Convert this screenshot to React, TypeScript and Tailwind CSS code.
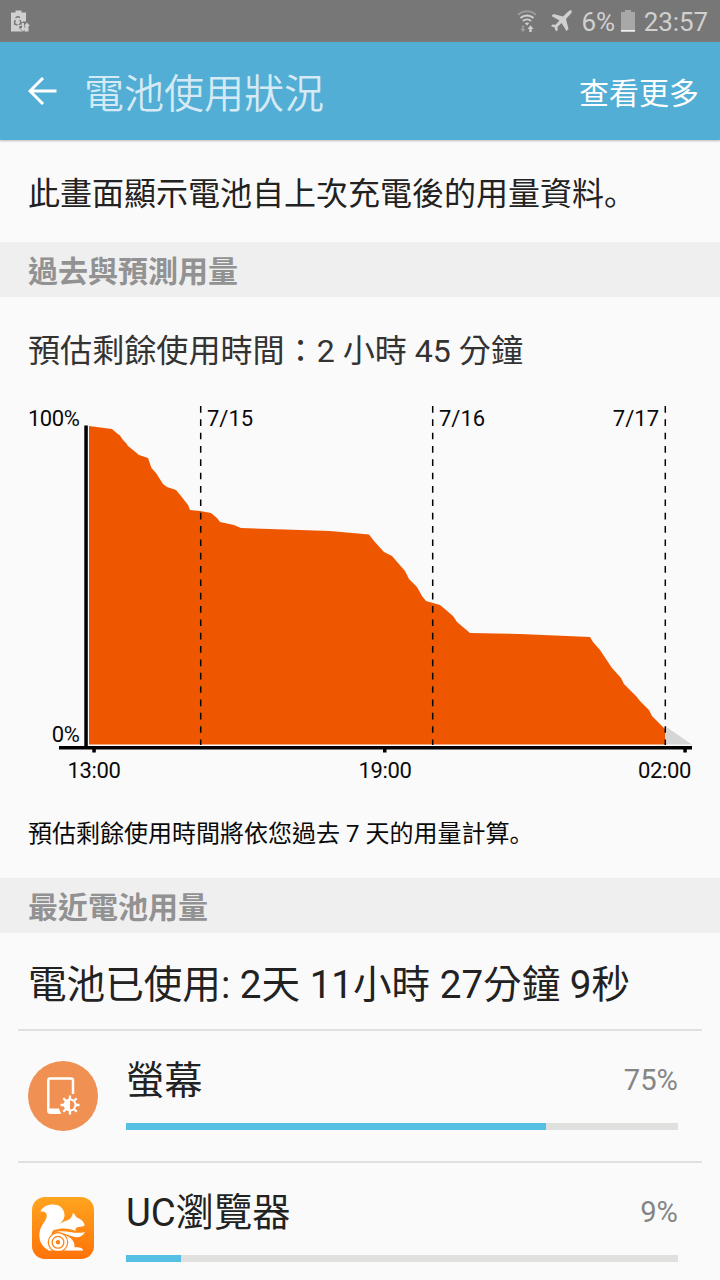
import React from 'react';

const CJK = "font-['Roboto','Noto_Sans_CJK_TC',sans-serif]";

const HISTORY =
  '89,426 112,429 116,432.5 120,435.5 123,440 126,443 128,446 133,450 139,455 148,458 151.5,468 156,473 163,484 167,487 176,490 181,496 188,505 190,510 200,511 211,513 217,518 220,522 234,525 241,528 270,529 330,531 369,534.5 374,541 384,552 392,556 398,563 405,571 409,579 417,587 422,596 426,601 440,605 446,610 453,616 457,622 470,633 520,634 590,637 593,642 600,650 612,668 621,678 624,684 636,696 640,701 649,710 652,716 665,729 665,744.5 89,744.5';

const StatusBar: React.FC = () => (
  <div className="flex h-[42px] items-center justify-between bg-[#777777] pr-[12px] pl-[11px] text-[#d0d0d0]">
    <svg className="h-[24px] w-[20px]" viewBox="0 0 20 24">
      <path d="M4.5 1.5h6v2H15v9h-3v5h3v5H0v-19h4.5z" fill="currentColor" />
      <path
        d="M4.5 9l2-1.5 2.5 1M9 11l1 3-2 2M6.5 16l-3-1 .5-4"
        fill="none"
        stroke="#777777"
        strokeWidth="1.5"
      />
      <path d="M8.5 17h2v-4h3v10H12l-4-4z" fill="#777777" />
      <path
        d="M11 14h2v5h2l-3 3.5L9 19h2zM16 22.5h-1.5V17H13l3-3.5L19 17h-1.5v5.5z"
        fill="currentColor"
      />
    </svg>
    <div className="flex items-center">
      <svg className="mr-[14px] h-[24px] w-[20px]" viewBox="0 0 20 24">
        <path d="M1 5.8a13 13 0 0 1 18 0" fill="none" stroke="#9b9b9b" strokeWidth="2" />
        <path
          d="M3.5 9a9.5 9.5 0 0 1 13 0M6 12a6 6 0 0 1 8 0"
          fill="none"
          stroke="currentColor"
          strokeWidth="2"
        />
        <path d="M7.8 14.2q2.2-1.5 4.4 0L10 16.5z" fill="currentColor" />
        <path d="M5 16.5h2V20h1.8L6 23l-2.8-3H5z" fill="#9b9b9b" />
        <path d="M12.3 23v-3h-1.8l3-3.8 3 3.8h-1.800v3z" fill="currentColor" />
      </svg>
      <svg className="mr-[9px] h-[22px] w-[21px]" viewBox="0 0 21 22">
        <path
          d="M20.5.5c.8 1 0 2.500-1 3.500l-4.500 5L17.500 19l-2 2-5-8-4 4 .3 3L5 21.500l-1.500-4L0 16l1.500-1.500 3 .3 4-4.300L.5 6l2-2L12 6.500 17 1.800C18 .8 19.500-.2 20.500.5z"
          fill="currentColor"
        />
      </svg>
      <span className="pt-[1px] text-[26px] leading-none tracking-[-0.2px]">6%</span>
      <svg className="mr-[9px] ml-[6px] h-[22px] w-[14px]" viewBox="0 0 14 22">
        <path d="M4 0h6v2h4v20H0V2h4z" fill="#a8a8a8" />
        <path d="M0 20h14v1.5H0z" fill="#f2f2f2" />
      </svg>
      <span className="pt-[1px] text-[26px] leading-none tracking-[-0.1px]">23:57</span>
    </div>
  </div>
);

const SectionHeader: React.FC<{ title: string }> = ({ title }) => (
  <h2 className="flex h-[55px] items-center bg-[#efefef] pt-[4px] pl-7 text-[30px] leading-none font-bold text-[#929292]">
    {title}
  </h2>
);

// full stop that sits in the lower left of its cell
const Stop: React.FC = () => (
  <span className="font-['Noto_Sans_CJK_JP',sans-serif]" lang="ja">
    。
  </span>
);

const BatteryChart: React.FC = () => (
  <svg className="block h-[400px] w-[720px]" viewBox="0 395 720 400">
    <polygon points="665,726 692,744.5 665,744.5" fill="#d6d6d6" />
    <polygon points={HISTORY} fill="#ee5700" />
    <g stroke="#000" strokeWidth="1.5" strokeDasharray="6.67 6.67">
      <path d="M200.7 406V745" />
      <path d="M432.7 406V745" />
      <path d="M665.3 406V745" />
    </g>
    <path d="M84.3 425.5h3.5V746h-3.5zM59 746h633v3.6H59z" />
    <path d="M92.3 749h3.5v3.6h-3.5zM383 749h3.5v3.6H383zM683.3 749h3.5v3.6h-3.5z" />
    <g fontSize="22" fill="#0a0a0a">
      <text x="79.5" y="425.5" textAnchor="end" letterSpacing="-0.4">100%</text>
      <text x="79.5" y="741.5" textAnchor="end" letterSpacing="-0.4">0%</text>
      <text x="207" y="425.5">7/15</text>
      <text x="439" y="425.5">7/16</text>
      <text x="659" y="425.5" textAnchor="end">7/17</text>
      <text x="94" y="777.5" textAnchor="middle" letterSpacing="-0.35">13:00</text>
      <text x="385" y="777.5" textAnchor="middle" letterSpacing="-0.35">19:00</text>
      <text x="691" y="777.5" textAnchor="end" letterSpacing="-0.35">02:00</text>
    </g>
  </svg>
);

const ScreenIcon: React.FC = () => (
  <svg className="h-[70px] w-[70px]" viewBox="0 0 70 70">
    <circle cx="35" cy="35" r="35" fill="#f09052" />
    <path
      d="M45 33V19.5q0-2-2-2H22.3q-2 0-2 2v30q0 2 2 2H32"
      fill="none"
      stroke="#fff"
      strokeWidth="2.5"
    />
    <path d="M20 47.5h11q.5 3 2.5 5.2H22q-2 0-2-2z" fill="#fff" />
    <path
      d="M42 34.5v19M32.5 44h19M35.3 37.3l13.4 13.4M48.7 37.3L35.3 50.7"
      stroke="#fff"
      strokeWidth="2.3"
    />
    <circle cx="42" cy="44" r="6.5" fill="#fff" />
    <path d="M42 39.5a4.5 4.5 0 0 1 0 9z" fill="#f09052" />
  </svg>
);

const UcIcon: React.FC = () => (
  <svg className="h-[70px] w-[70px]" viewBox="0 0 70 70">
    <defs>
      <linearGradient id="uc" x1="0" y1="0" x2="0" y2="1">
        <stop offset="0" stopColor="#ffa51f" />
        <stop offset="1" stopColor="#ff7208" />
      </linearGradient>
    </defs>
    <rect x="4" y="4" width="62" height="62" rx="13" fill="url(#uc)" />
    <g fill="#fff">
      {/* tail */}
      <path d="M12.5 18.5C16 9.500 36 8 36.500 22c0 9-12 11-13 20l-2 15.500C10 53 9 39 15 31c4-5 7-13-2.500-12.500z" />
      {/* head and chest */}
      <path d="M25 37.500c2-5 8-8 14-10 3-1 5-3 6-8l4 5.300c4 1.200 7.500 4 7.500 8-3 1.500-6 .7-8 2-2 1.500 0 3-1 3-5-2-13-4-22.500-.3z" />
      {/* paw */}
      <path d="M26 39.500c12-4 19 2.500 31-.5-3 5.500-8 6-13 4.300-5-1.800-10-4.300-18-3.800z" />
      {/* leg */}
      <path d="M20 57.700h35c0-3-3-3.700-8.500-3.500 1-7-6-12.500-15-12.700z" />
    </g>
    <circle cx="30" cy="49.3" r="10.3" fill="#ff8212" />
    <circle cx="30" cy="49.3" r="7.800" fill="none" stroke="#fff" strokeWidth="2.600" />
    <circle cx="30" cy="49.3" r="3.700" fill="none" stroke="#fff" strokeWidth="3" />
    <path d="M18 57.700h37v3H18z" fill="#ff780b" />
  </svg>
);

interface UsageRowProps {
  icon: React.ReactNode;
  name: string;
  percent: number;
}

const UsageRow: React.FC<UsageRowProps> = ({ icon, name, percent }) => (
  <li className="mx-[18px] flex h-[132px] border-t-2 border-[#e0e0e0] pt-[30px] pr-[24px] pl-[10px]">
    {icon}
    <div className="ml-7 flex-1">
      <div className="flex h-[40px] items-center justify-between">
        <span className="text-[38.3px] leading-none text-[#222222]">{name}</span>
        <span className="text-[29.2px] leading-none text-[#858585]">{percent}%</span>
      </div>
      <div className="mt-[22px] h-[7px] bg-[#e0e0de]">
        <div className="h-full bg-[#55bfe4]" style={{ width: `${percent + 1}%` }} />
      </div>
    </div>
  </li>
);

export default function App() {
  return (
    <div className={`h-[1280px] w-[720px] overflow-hidden bg-[#fafafa] ${CJK}`}>
      <StatusBar />
      <header className="flex h-[98px] items-center bg-[#52aed5] pr-[21px] pl-7 text-white shadow-[0_1px_2px_#bbbbbb]">
        <svg className="h-[28px] w-[29px]" viewBox="0 0 29 28">
          <path d="M15 1L2 14l13 13M2 14h26.5" fill="none" stroke="#fff" strokeWidth="3" />
        </svg>
        <h1 className="ml-[27px] pt-[7px] text-[40px] leading-none font-[350] text-[#d5eaf4]">
          電池使用狀況
        </h1>
        <span className="ml-auto pt-[5px] text-[30px] leading-none">查看更多</span>
      </header>
      <p className="flex h-[102px] items-center pt-[3px] pl-7 text-[32px] leading-none text-[#222222]">
        <span>
          此畫面顯示電池自上次充電後的用量資料
          <Stop />
        </span>
      </p>
      <SectionHeader title="過去與預測用量" />
      <p className="flex h-[98px] items-center pt-[11px] pl-7 text-[32.1px] leading-none text-[#333333]">
        預估剩餘使用時間：2 小時 45 分鐘
      </p>
      <BatteryChart />
      <p className="flex h-[83px] items-center pb-[8px] pl-7 text-[24px] leading-none text-[#0a0a0a]">
        <span>
          預估剩餘使用時間將依您過去 7 天的用量計算
          <Stop />
        </span>
      </p>
      <SectionHeader title="最近電池用量" />
      <p className="flex h-[96px] items-center pt-[9px] pl-7 text-[38.6px] leading-none text-[#222222]">
        電池已使用: 2天 11小時 27分鐘 9秒
      </p>
      <ul>
        <UsageRow icon={<ScreenIcon />} name="螢幕" percent={75} />
        <UsageRow icon={<UcIcon />} name="UC瀏覽器" percent={9} />
      </ul>
    </div>
  );
}
